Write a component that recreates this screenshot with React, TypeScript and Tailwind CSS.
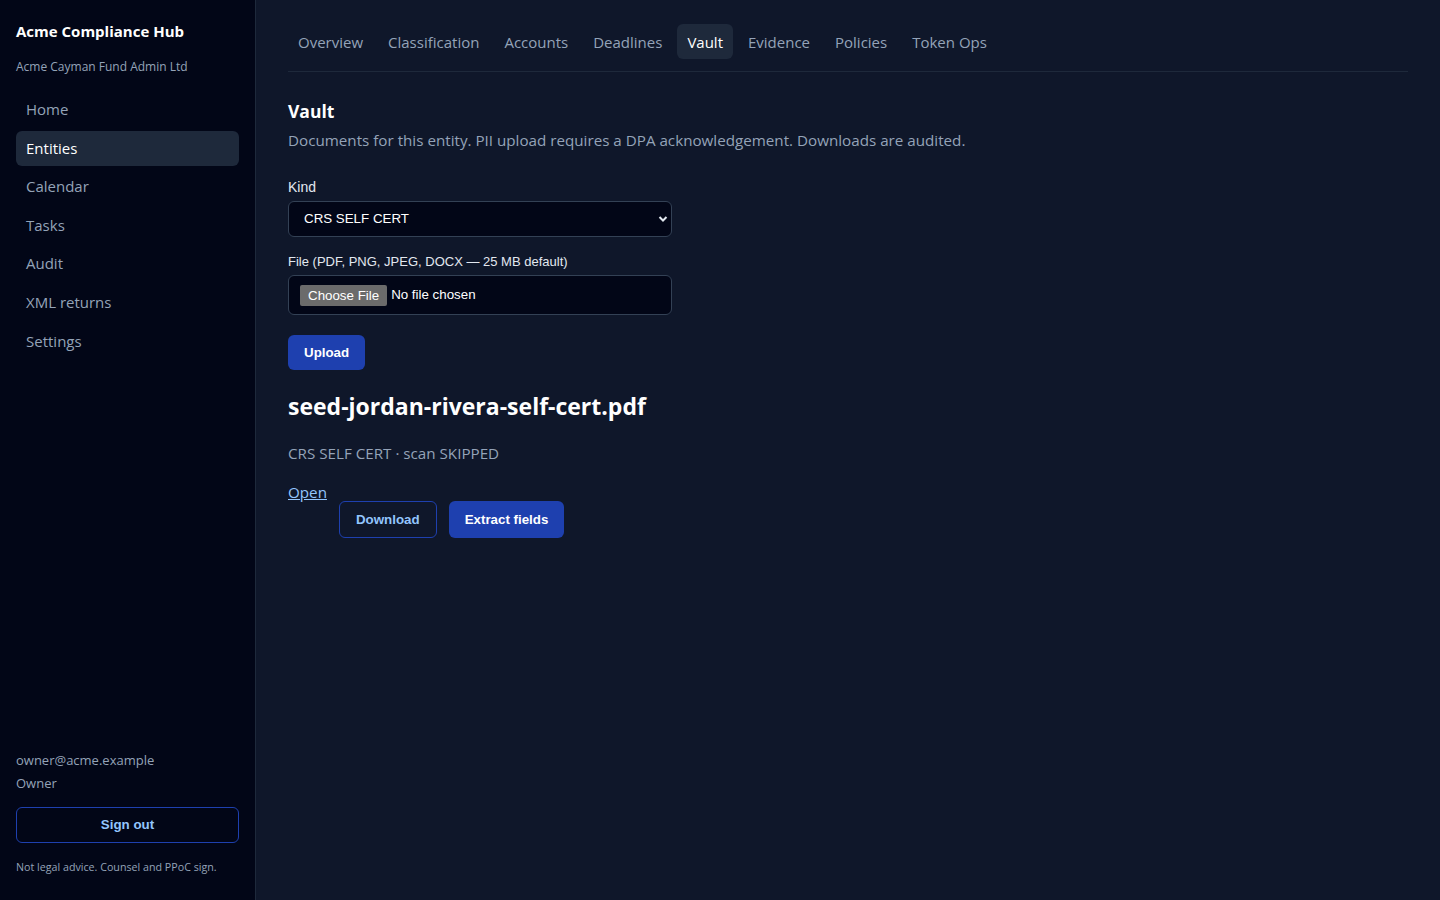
import React from 'react';

const sans = "font-['Open_Sans',sans-serif]";
const arial = "font-['Liberation_Sans',Arial,sans-serif]";

const navItems = ['Home', 'Entities', 'Calendar', 'Tasks', 'Audit', 'XML returns', 'Settings'];
const tabs = ['Overview', 'Classification', 'Accounts', 'Deadlines', 'Vault', 'Evidence', 'Policies', 'Token Ops'];

const Sidebar: React.FC = () => (
  <aside className={`w-[256px] shrink-0 bg-[#020617] border-r border-[#1e293b] flex flex-col px-4 pt-[20px] pb-[25px] ${sans}`}>
    <div className="text-[15px] font-bold text-white leading-[22px]">Acme Compliance Hub</div>
    <div className="mt-[16px] text-[12px] text-[#94a3b8] leading-[18px]">Acme Cayman Fund Admin Ltd</div>
    <nav className="mt-[16px] flex flex-col gap-[3.6px]">
      {navItems.map((item) => (
        <a
          key={item}
          className={
            item === 'Entities'
              ? 'rounded-md bg-[#1e293b] px-[10px] py-1.5 text-[15px] leading-[23px] text-white'
              : 'rounded-md px-[10px] py-1.5 text-[15px] leading-[23px] text-[#94a3b8]'
          }
        >
          {item}
        </a>
      ))}
    </nav>
    <div className="mt-auto">
      <div className="text-[13px] leading-[20px] text-[#94a3b8]">owner@acme.example</div>
      <div className="mt-[3px] text-[13px] leading-[20px] text-[#94a3b8]">Owner</div>
      <button className={`mt-[14px] w-full h-[36px] rounded-md border border-[#1e40af] text-[13.33px] font-bold text-[#93c5fd] ${arial}`}>
        Sign out
      </button>
      <div className="mt-[16px] text-[10.7px] leading-[16px] text-[#94a3b8]">Not legal advice. Counsel and PPoC sign.</div>
    </div>
  </aside>
);

const Main: React.FC = () => (
  <main className={`flex-1 px-8 pt-[24px] ${sans}`}>
    <div className="flex gap-[5px] border-b border-[#1e293b] pb-[12px]">
      {tabs.map((t) => (
        <a
          key={t}
          className={
            t === 'Vault'
              ? 'rounded-md bg-[#1e293b] px-[10px] pt-[7px] pb-[5px] text-[15px] leading-[23px] text-white'
              : 'rounded-md px-[10px] pt-[7px] pb-[5px] text-[15px] leading-[23px] text-[#94a3b8]'
          }
        >
          {t}
        </a>
      ))}
    </div>

    <h1 className="mt-[25px] text-[17.5px] font-bold leading-[28px] text-white">Vault</h1>
    <p className="mt-[3px] text-[15.2px] leading-[24px] text-[#94a3b8]">
      Documents for this entity. PII upload requires a DPA acknowledgement. Downloads are audited.
    </p>

    <form className={`mt-[26px] w-[384px] flex flex-col ${arial}`}>
      <label className="text-[14px] leading-[18px] text-[#e2e8f0]">Kind</label>
      <div className="relative mt-[5px]">
        <select className="h-[36px] w-full appearance-none rounded-md border border-[#334155] bg-[#020617] px-[15px] text-[13.33px] text-white">
          <option>CRS SELF CERT</option>
        </select>
        <svg className="pointer-events-none absolute right-[4px] top-[13px]" width="10" height="10" viewBox="0 0 10 10">
          <path d="M1.5 3 L5 6.5 L8.5 3" fill="none" stroke="#e2e8f0" strokeWidth="2" />
        </svg>
      </div>

      <label className="mt-[16px] text-[13px] leading-[18px] text-[#e2e8f0]">File (PDF, PNG, JPEG, DOCX — 25 MB default)</label>
      <div className="mt-[4px] flex h-[40px] items-center rounded-md border border-[#334155] bg-[#020617] px-[11px] text-[13.33px] text-white">
        <span className="rounded-[2px] bg-[#6b6b6b] px-[8px] py-[1px] leading-[19px] text-white">Choose File</span>
        <span className="ml-[4px]">No file chosen</span>
      </div>

      <div className="mt-[20px]">
        <button type="button" className="h-[35px] rounded-md bg-[#1e40af] px-[16px] text-[13.33px] font-bold text-white">
          Upload
        </button>
      </div>
    </form>

    <h2 className="mt-[20px] text-[23px] font-bold leading-[32px] text-white">seed-jordan-rivera-self-cert.pdf</h2>
    <div className="mt-[19px] text-[15.2px] leading-[24px] text-[#94a3b8]">CRS SELF CERT · scan SKIPPED</div>
    <div className="mt-[15px] flex items-start gap-3">
      <a className="text-[15.2px] leading-[24px] text-[#93c5fd] underline">Open</a>
      <button type="button" className={`mt-[21px] h-[37px] rounded-md border border-[#1e40af] px-[16px] text-[13.33px] font-bold text-[#93c5fd] ${arial}`}>
        Download
      </button>
      <button type="button" className={`mt-[21px] h-[37px] rounded-md bg-[#1e40af] px-[16px] text-[13.33px] font-bold text-white ${arial}`}>
        Extract fields
      </button>
    </div>
  </main>
);

export default function App() {
  return (
    <div className="flex min-h-[900px] bg-[#0f172a]">
      <Sidebar />
      <Main />
    </div>
  );
}
